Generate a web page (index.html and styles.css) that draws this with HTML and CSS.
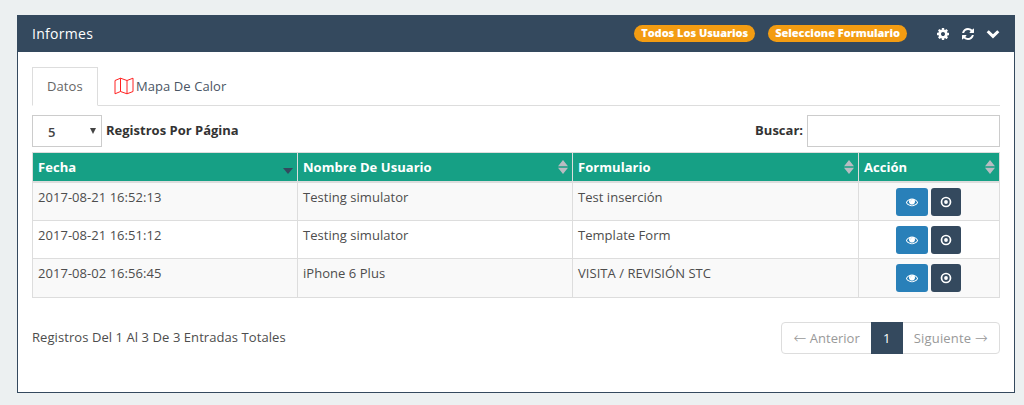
FILE: index.html
```html
<!DOCTYPE html>
<html lang="es">
<head>
  <meta charset="UTF-8">
  <title>Informes</title>
  <link rel="stylesheet" href="styles.css">
</head>
<body>
  <!-- icon set -->
  <svg class="sprite">
    <symbol id="cog" viewBox="0 0 1792 1792"><path d="M1152 896q0-106-75-181t-181-75-181 75-75 181 75 181 181 75 181-75 75-181zm512-109v222q0 12-8 23t-20 13l-185 28q-19 54-39 91 35 50 107 138 10 12 10 25t-9 23q-27 37-99 108t-94 71q-12 0-26-9l-138-108q-44 23-91 38-16 136-29 186-7 28-36 28h-222q-14 0-24.500-8.500t-11.500-21.500l-28-184q-49-16-90-37l-141 107q-10 9-25 9-14 0-25-11-126-114-165-168-7-10-7-23 0-12 8-23 15-21 51-66.500t54-70.500q-27-50-41-99l-183-27q-13-2-21-12.500t-8-23.500v-222q0-12 8-23t19-13l186-28q14-46 39-92-40-57-107-138-10-12-10-24 0-10 9-23 26-36 98.500-107.500t94.500-71.500q13 0 26 10l138 107q44-23 91-38 16-136 29-186 7-28 36-28h222q14 0 24.500 8.500t11.500 21.500l28 184q49 16 90 37l142-107q9-9 24-9 13 0 25 10 129 119 165 170 7 8 7 22 0 12-8 23-15 21-51 66.500t-54 70.500q26 50 41 98l183 28q13 2 21 12.500t8 23.500z"/></symbol>
    <symbol id="refresh" viewBox="0 0 1792 1792"><path d="M1639 1056q0 5-1 7-64 268-268 434.500t-478 166.500q-146 0-282.500-55t-243.500-157l-129 129q-19 19-45 19t-45-19-19-45v-448q0-26 19-45t45-19h448q26 0 45 19t19 45-19 45l-137 137q71 66 161 102t187 36q134 0 250-65t186-179q11-17 53-117 8-23 30-23h192q13 0 22.500 9.500t9.500 22.500zm25-800v448q0 26-19 45t-45 19h-448q-26 0-45-19t-19-45 19-45l138-138q-148-137-349-137-134 0-250 65t-186 179q-11 17-53 117-8 23-30 23h-199q-13 0-22.500-9.500t-9.500-22.500v-7q65-268 270-434.500t480-166.500q146 0 284 55.500t245 156.500l130-129q19-19 45-19t45 19 19 45z"/></symbol>
    <symbol id="chevron" viewBox="0 0 14 14"><path d="M1.700 4.200 7 9.400l5.300-5.200" fill="none" stroke="currentColor" stroke-width="3"/></symbol>
    <symbol id="eye" viewBox="0 0 1792 1792"><path d="M1664 960q-152-236-381-353 61 104 61 225 0 185-131.500 316.500t-316.500 131.500-316.500-131.500-131.500-316.500q0-121 61-225-229 117-381 353 133 205 333.500 326.500t434.500 121.500 434.500-121.500 333.500-326.500zm-720-384q0-20-14-34t-34-14q-125 0-214.500 89.500t-89.500 214.500q0 20 14 34t34 14 34-14 14-34q0-86 61-147t147-61q20 0 34-14t14-34zm848 384q0 34-20 69-140 230-376.500 368.500t-499.500 138.500-499.500-139-376.500-368q-20-35-20-69t20-69q140-229 376.500-368t499.500-139 499.500 139 376.500 368q20 35 20 69z"/><circle cx="896" cy="850" r="360" opacity=".8"/></symbol>
    <symbol id="dot" viewBox="0 0 12 12"><circle cx="6" cy="6" r="4.500" fill="none" stroke="currentColor" stroke-width="1.700"/><circle cx="6" cy="6" r="1.900"/></symbol>
    <symbol id="sort" viewBox="0 0 10 14"><path d="M0 6.300 5 0l5 6.300zM0 7.700h10L5 14z"/></symbol>
    <symbol id="sort-desc" viewBox="0 0 10 14"><path d="M0 8h10l-5 6z"/></symbol>
  </svg>

  <div class="panel">
    <div class="panel-heading">
      <h3>Informes</h3>
      <span class="badge">Todos Los Usuarios</span>
      <span class="badge">Seleccione Formulario</span>
      <div class="tools">
        <svg><use href="#cog"/></svg>
        <svg><use href="#refresh"/></svg>
        <svg><use href="#chevron"/></svg>
      </div>
    </div>
    <div class="panel-body">
      <div class="tabs">
        <a class="tab active">Datos</a>
        <a class="tab"><svg class="map" viewBox="0 0 20 18"><path d="M1 3.500 6.500 1.200 13 3.500 19 1.200v13.300l-6 2.300-6.500-2.300L1 16.800zM6.500 1.200v13.300M13 3.500v13.300"/></svg>Mapa De Calor</a>
      </div>

      <div class="filters">
        <label class="length">
          <span class="select"><span>5</span><svg class="caret" viewBox="0 0 6 6"><path d="M0 0h6L3 6z"/></svg></span>
          <span class="text">Registros Por Página</span>
        </label>
        <label class="search"><span class="text">Buscar:</span><input type="text"></label>
      </div>

      <table>
        <colgroup><col class="c-date"><col class="c-user"><col class="c-form"><col class="c-action"></colgroup>
        <thead>
          <tr>
            <th><div class="th">Fecha<svg class="sorted"><use href="#sort-desc"/></svg></div></th>
            <th><div class="th">Nombre De Usuario<svg><use href="#sort"/></svg></div></th>
            <th><div class="th">Formulario<svg><use href="#sort"/></svg></div></th>
            <th><div class="th">Acción<svg><use href="#sort"/></svg></div></th>
          </tr>
        </thead>
        <tbody>
          <tr>
            <td>2017-08-21 16:52:13</td>
            <td>Testing simulator</td>
            <td>Test inserción</td>
            <td><div class="actions"><a class="btn view"><svg><use href="#eye"/></svg></a><a class="btn locate"><svg><use href="#dot"/></svg></a></div></td>
          </tr>
          <tr>
            <td>2017-08-21 16:51:12</td>
            <td>Testing simulator</td>
            <td>Template Form</td>
            <td><div class="actions"><a class="btn view"><svg><use href="#eye"/></svg></a><a class="btn locate"><svg><use href="#dot"/></svg></a></div></td>
          </tr>
          <tr>
            <td>2017-08-02 16:56:45</td>
            <td>iPhone 6 Plus</td>
            <td>VISITA / REVISIÓN STC</td>
            <td><div class="actions"><a class="btn view"><svg><use href="#eye"/></svg></a><a class="btn locate"><svg><use href="#dot"/></svg></a></div></td>
          </tr>
        </tbody>
      </table>

      <div class="footer">
        <span class="info">Registros Del 1 Al 3 De 3 Entradas Totales</span>
        <div class="pagination">
          <a><span class="arrow">←</span> Anterior</a>
          <a class="current">1</a>
          <a class="next">Siguiente <span class="arrow">→</span></a>
        </div>
      </div>
    </div>
  </div>
</body>
</html>
```

FILE: styles.css
```css
* { box-sizing: border-box; }

body {
  margin: 0;
  padding: 15px 9px 12px 17px;
  height: 405px;
  background: #ecf0f1;
  font: 13px/18px "Open Sans", sans-serif;
  color: #4d4d4d;
  overflow: hidden;
}

svg { display: block; fill: currentColor; flex: none; }
.sprite { display: none; }

.panel {
  height: 378px;
  background: #fff;
  border: 1px solid #34495e;
}

.panel-heading {
  display: flex;
  align-items: center;
  height: 36px;
  padding: 0 14px 1px;
  background: #34495e;
  color: #fff;
}
.panel-heading h3 {
  flex: 1;
  margin: 0;
  padding-top: 1px;
  font-size: 14px;
  font-weight: 500;
  letter-spacing: .3px;
}

.badge {
  height: 17px;
  margin-right: 13px;
  padding: 0 7px;
  border-radius: 9px;
  background: #f39c12;
  font-size: 11px;
  font-weight: 800;
  line-height: 16px;
  letter-spacing: -.04px;
}

.tools { display: flex; gap: 11px; margin-left: 16px; }
.tools svg { width: 14px; height: 14px; }

.panel-body { padding: 15px 14px 0; }

.tabs {
  display: flex;
  height: 39px;
  border-bottom: 1px solid #ddd;
}
.tab {
  display: flex;
  align-items: center;
  height: 39px;
  padding: 0 15px 2px;
  border: 1px solid transparent;
  color: #4a5564;
  letter-spacing: .07px;
}
.tab.active {
  padding: 0 14px 2px;
  width: 66px;
  border-color: #ddd #ddd #fff;
  background: #fff;
  color: #666;
}
.map {
  width: 20px;
  height: 18px;
  margin-right: 2px;
  fill: none;
  stroke: #f22;
}

.filters {
  display: flex;
  justify-content: space-between;
  margin: 9px 0 5px;
  font-weight: 700;
  color: #333;
}
.filters label { display: flex; align-items: center; gap: 4px; }
.filters .text { padding-bottom: 2px; }
.select {
  display: flex;
  align-items: center;
  justify-content: space-between;
  width: 70px;
  height: 32px;
  padding: 2px 5px 0 15px;
  border: 1px solid #ccc;
  font-weight: 600;
  color: #444;
}
.caret { width: 6px; height: 6px; margin-bottom: 3px; }
.search input {
  width: 193px;
  height: 32px;
  border: 1px solid #ccc;
}

table {
  width: 968px;
  table-layout: fixed;
  border-collapse: collapse;
  border: 1px solid #ddd;
}
.c-date { width: 265px; }
.c-user { width: 275px; }
.c-form { width: 286px; }
th, td {
  border: 1px solid #ddd;
  padding: 5px;
  text-align: left;
  vertical-align: top;
}
th {
  height: 29px;
  padding: 0 4px 0 5px;
  border-bottom-width: 2px;
  background: #16a085;
  color: #fff;
  vertical-align: middle;
  letter-spacing: .05px;
}
.th { display: flex; justify-content: space-between; align-items: center; }
.th svg { width: 10px; height: 14px; color: #b9bcc2; }
.th .sorted { color: #34495e; }
td { height: 38.500px; padding: 5px 5px 0; letter-spacing: .04px; }
tbody tr:nth-child(odd) { background: #f9f9f9; }

.actions { display: flex; justify-content: center; gap: 3px; margin-right: 1px; }
.btn {
  display: flex;
  align-items: center;
  justify-content: center;
  height: 28px;
  border-radius: 3px;
  color: #fff;
}
.btn svg { width: 12px; height: 12px; }
.view { width: 32px; background: #2980b9; }
.locate { width: 30px; background: #34495e; }

.footer {
  display: flex;
  justify-content: space-between;
  margin-top: 24px;
  line-height: 30px;
}
.info { letter-spacing: .07px; }
.pagination {
  display: flex;
  height: 32px;
  border: 1px solid #ddd;
  border-radius: 4px;
  color: #999;
}
.pagination a { padding: 0 11px; }
.pagination .next { letter-spacing: .18px; }
.arrow {
  font-family: "DejaVu Sans", sans-serif;
  font-size: 15.500px;
  font-weight: 200;
  line-height: 1;
}
.pagination .current {
  width: 32px;
  margin: -1px 0;
  padding: 1px 0;
  text-align: center;
  background: #34495e;
  color: #fff;
}
```
